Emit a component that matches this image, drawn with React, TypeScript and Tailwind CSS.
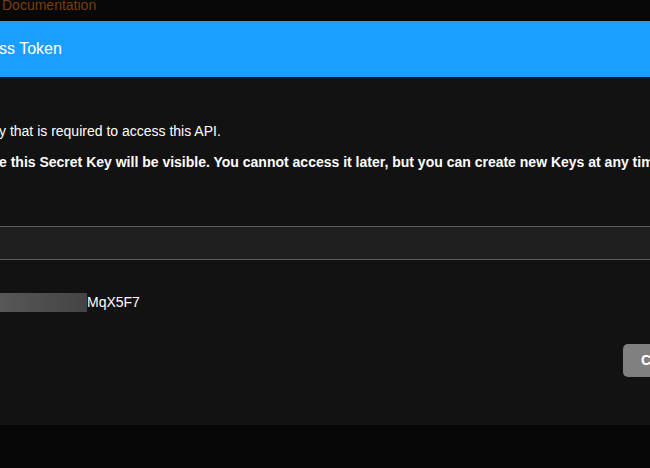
export default function App() {
  return (
    <div className="w-[650px] h-[468px] overflow-hidden bg-[#070707] font-['Liberation_Sans',Arial,sans-serif] text-white">
      {/* page nav behind the modal */}
      <div className="h-[21px] bg-[#080808] overflow-hidden">
        <div className="pl-[2px] -mt-[3px] text-[14px] leading-[16px] text-[#7a3e08]">Documentation</div>
      </div>

      {/* modal */}
      <div className="h-[404px] bg-[#121212] flex flex-col">
        <div className="h-[56px] bg-[#1a9fff] flex items-center whitespace-nowrap">
          <span className="-ml-[1px] text-[16px]">ss Token</span>
        </div>

        <div className="pt-[46px] text-[14px] whitespace-nowrap">
          <p className="-ml-[1px] leading-[17px]">y that is required to access this API.</p>
          <p className="-ml-[1px] mt-[14px] leading-[17px] font-bold">
            e this Secret Key will be visible. You cannot access it later, but you can create new Keys at any time.
          </p>
        </div>

        <div className="mt-[55px] h-[34px] border-y border-[#5c5c5c] bg-[#1f1f1f]" />

        <div className="mt-[33px] flex items-center text-[14px]">
          <div className="w-[87px] h-[19px] bg-gradient-to-r from-[#575757] to-[#444444]" />
          <span className="leading-[17px]">MqX5F7</span>
        </div>

        <div className="mt-[32px] flex justify-end">
          <button className="w-[27px] h-[33px] overflow-hidden rounded-l-[5px] bg-[#808080] pl-[18px] text-left text-[14px] font-bold whitespace-nowrap">
            Close
          </button>
        </div>
      </div>
    </div>
  );
}
